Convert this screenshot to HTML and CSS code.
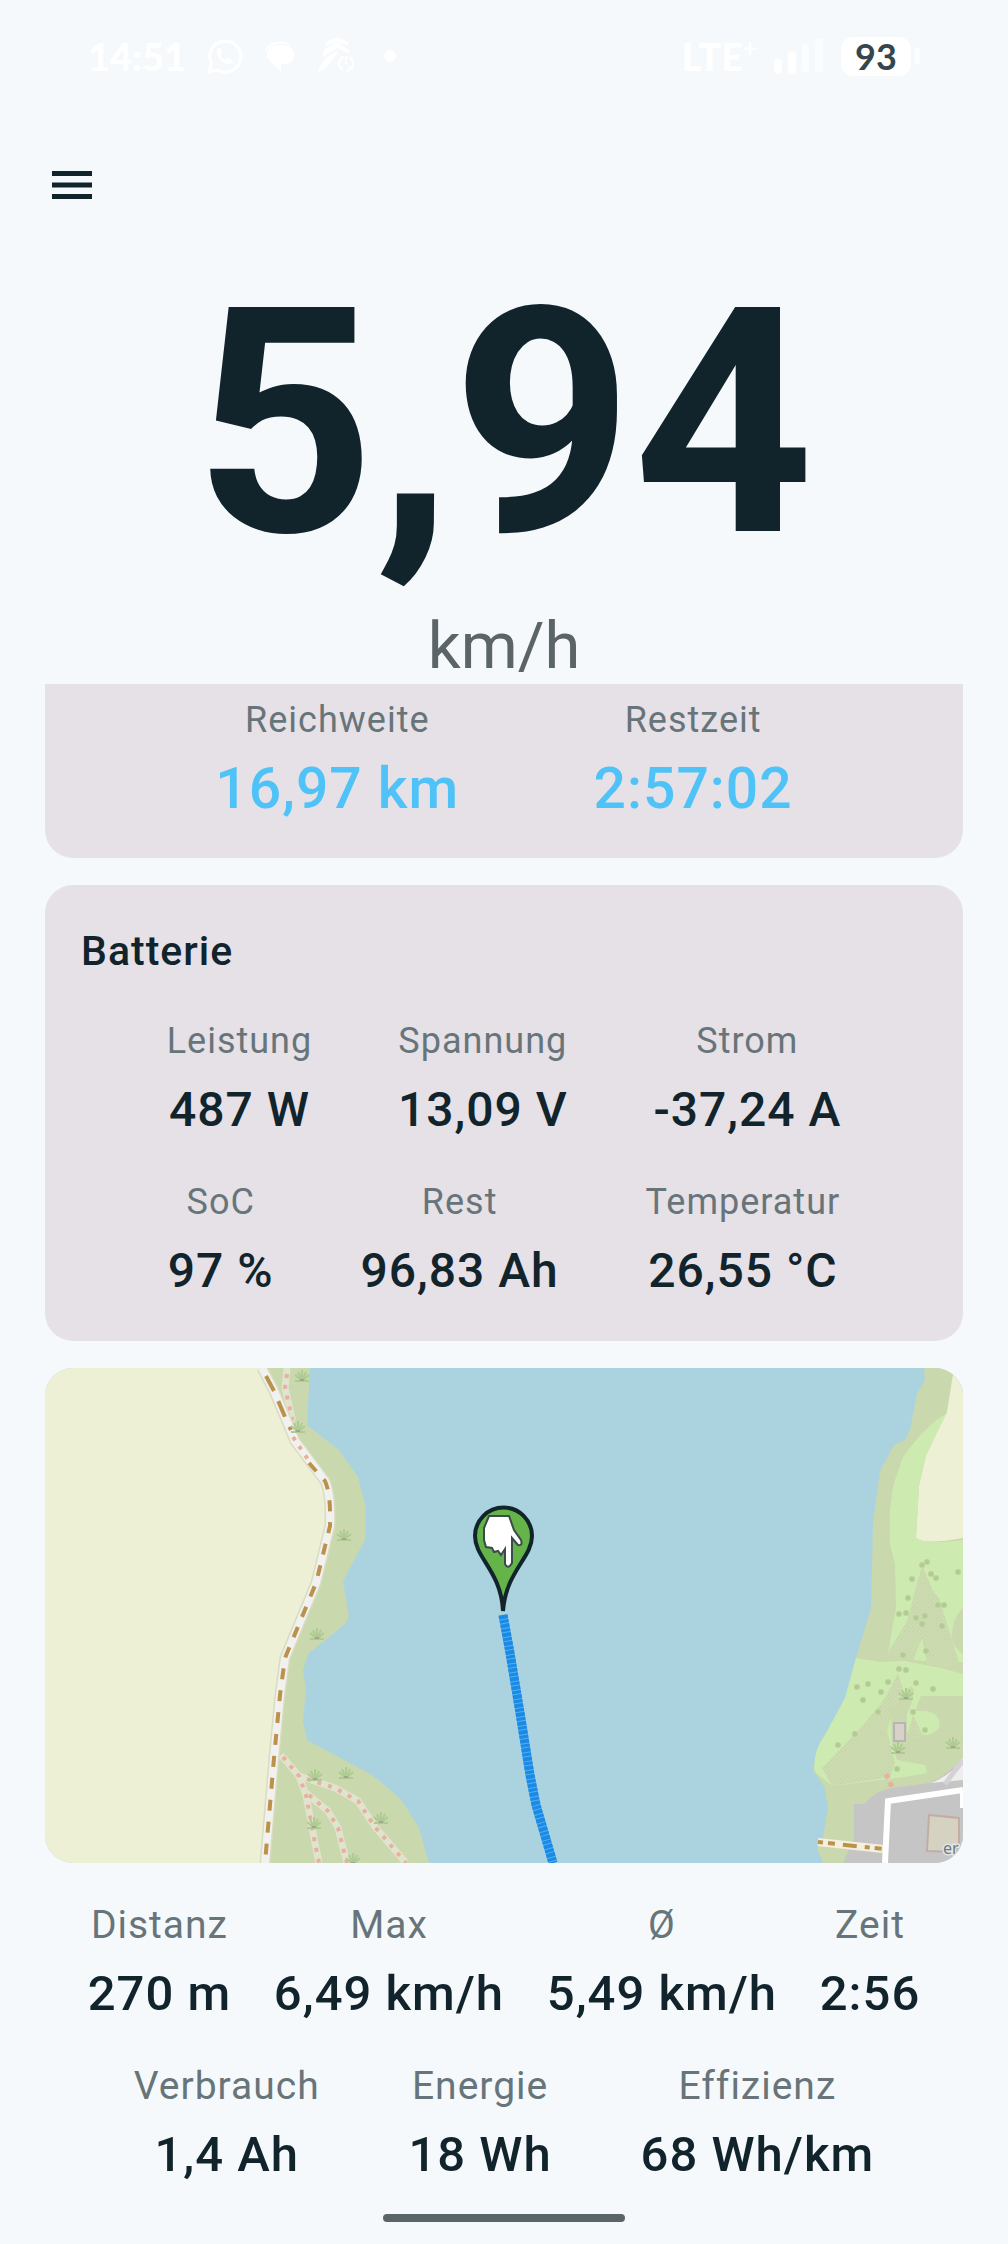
FILE: index.html
```html
<!DOCTYPE html>
<html lang="de">
<head>
    <meta charset="UTF-8">
    <meta name="viewport" content="width=device-width, initial-scale=1.0">
    <title>Fahrt</title>
    <link rel="stylesheet" href="styles.css">
</head>
<body>
    <div class="status-bar">
        <div class="status-left">
            <span class="clock">14:51</span>
            <svg class="status-icon" width="36" height="36" viewBox="0 0 36 36">
                <path d="M2 34l2.400-8.500A15.500 15.500 0 1 1 10.500 32z" fill="none" stroke="#fff" stroke-width="3"/>
                <path d="M12 10c-4 3-2 8 2 12s9 6 12 2l-1-2-4-2-2 2c-3-1-5-3-6-6l2-2-1-4z" fill="#fff"/>
            </svg>
            <svg class="status-icon" width="32" height="32" viewBox="0 0 32 32">
                <path d="M1 13C1 0 20-1 27 5C17 2 6 3 1 13z" fill="#fff"/>
                <path d="M13 5h6c15 0 15 19 1 19h-3v7L7 22C0 17 2 5 13 5z" fill="#fff"/>
            </svg>
            <svg class="status-icon" width="38" height="38" viewBox="0 0 38 38">
                <path d="M9 5l11-5 11 5v4L20 5 9 9zM7 13L20 5l13 9-2 2-11-5L6 20z" fill="#fff"/>
                <path d="M1 36C4 24 12 16 22 14L11 29z" fill="#fff"/>
                <path d="M27 20a7 7 0 0 0-1 13M32 20a7 7 0 0 1 1 12M29 19v8M31 35l1-4 4 1" fill="none" stroke="#fff" stroke-width="2"/>
            </svg>
            <span class="status-dot"></span>
        </div>
        <div class="status-right">
            <span class="network">LTE<sup>+</sup></span>
            <svg width="50" height="36" viewBox="0 0 50 36">
                <rect x="0" y="21" width="8" height="15" rx="4" fill="#fff"/>
                <rect x="14" y="13" width="8" height="23" rx="4" fill="#fff"/>
                <rect x="28" y="6" width="7" height="29" rx="3" fill="#fff" opacity="0.5"/>
                <rect x="41" y="0" width="8" height="35" rx="4" fill="#fff" opacity="0.5"/>
            </svg>
            <div class="battery">
                <span class="battery-level">93</span>
                <span class="battery-tip"></span>
            </div>
        </div>
    </div>

    <header class="top-bar">
        <button class="menu-button" type="button" aria-label="Menü">
            <svg width="42" height="28" viewBox="0 0 42 28">
                <path d="M1 2.500h40M1 14h40M1 25.500h40" stroke="#11242c" stroke-width="5"/>
            </svg>
        </button>
    </header>

    <main>
        <div class="speed">
            <div class="speed-value">5,94</div>
            <div class="speed-unit">km/h</div>
        </div>

        <section class="card card-range">
            <div class="row">
                <div class="stat"><span class="label">Reichweite</span><span class="value">16,97 km</span></div>
                <div class="stat"><span class="label">Restzeit</span><span class="value">2:57:02</span></div>
            </div>
        </section>

        <section class="card card-battery">
            <h2>Batterie</h2>
            <div class="row">
                <div class="stat"><span class="label">Leistung</span><span class="value">487 W</span></div>
                <div class="stat"><span class="label">Spannung</span><span class="value">13,09 V</span></div>
                <div class="stat"><span class="label">Strom</span><span class="value">-37,24 A</span></div>
            </div>
            <div class="row">
                <div class="stat"><span class="label">SoC</span><span class="value">97 %</span></div>
                <div class="stat"><span class="label">Rest</span><span class="value">96,83 Ah</span></div>
                <div class="stat"><span class="label">Temperatur</span><span class="value">26,55 °C</span></div>
            </div>
        </section>

        <div class="map">
            <svg viewBox="0 0 918 495" preserveAspectRatio="xMidYMid slice">
                <defs>
                    <pattern id="scrub" width="4" height="4" patternUnits="userSpaceOnUse">
                        <rect width="4" height="4" fill="#c9d8ad"/>
                        <path d="M0 0h1v1H0zM2 2h1v1H2z" fill="#d9dfc5"/>
                    </pattern>
                    <g id="grass" fill="none" stroke="#aecb92" stroke-width="2">
                        <path d="M-7 5H7M0 4V-6M-1 4L-7-1M1 4L7-1M-1 3L-4-4M1 3L4-4"/>
                        <path d="M-2 4h4" stroke="#a3a493"/>
                    </g>
                    <g id="tree">
                        <circle r="3" fill="#b9d39b"/>
                        <circle r="2" fill="#b5c896"/>
                    </g>
                </defs>

                <!-- water -->
                <rect width="918" height="495" fill="#abd3df"/>

                <!-- west bank -->
                <path d="M210 0H265L262 57L294 82L313 109L321 140L320 172L298 213L304 249L300 256L263 286L258 303L261 322L258 353L262 372L327 407L356 431L374 460L384 495H210z" fill="#c9d8ad"/>
                <path d="M0 0H218L236 38L246 72L284 122L285 160L270 218L239 295L233 370L222 495H0z" fill="#edf0d5"/>
                <g fill="none" stroke="#e0e3cd" stroke-width="7">
                    <path d="M242 0L240 20L247 50L244 62"/>
                    <path d="M236 387L254 408L261 427L268 465L274 495"/>
                    <path d="M254 408L290 420L313 433L330 459L361 495"/>
                    <path d="M261 425L283 443L293 460L302 495"/>
                </g>
                <g fill="none" stroke="#e9b19d" stroke-width="4" stroke-dasharray="4 7">
                    <path d="M242 6L240 20L247 50L244 62"/>
                    <path d="M238 389L254 408L261 427L268 465L274 495"/>
                    <path d="M262 411L290 420L313 433L330 459L361 495"/>
                    <path d="M264 427L283 443L293 460L302 495"/>
                </g>
                <path d="M217 0L229 23L243 56L250 73L280 113Q286 126 285 158L271 215L240 290L235 327L229 390L220 495" fill="none" stroke="#d9dcc0" stroke-width="11"/>
                <path d="M217 0L229 23L243 56L250 73L280 113Q286 126 285 158L271 215L240 290L235 327L229 390L220 495" fill="none" stroke="#f1f1ef" stroke-width="8"/>
                <path d="M221 8L229 23L243 56L246 62" fill="none" stroke="#ba924b" stroke-width="4" stroke-dasharray="17 11"/>
                <path d="M248 69L264 93" fill="none" stroke="#e9b19d" stroke-width="4" stroke-dasharray="4 7"/>
                <path d="M264 95L280 113Q286 126 285 158L271 215L240 290L235 327L229 390L220 495" fill="none" stroke="#ba924b" stroke-width="4" stroke-dasharray="11 11"/>
                <use href="#grass" x="257" y="8"/>
                <use href="#grass" x="253" y="59"/>
                <use href="#grass" x="299" y="167"/>
                <use href="#grass" x="272" y="266"/>
                <use href="#grass" x="301" y="405"/>
                <use href="#grass" x="270" y="407"/>
                <use href="#grass" x="336" y="450"/>
                <use href="#grass" x="269" y="455"/>
                <use href="#grass" x="308" y="491"/>

                <!-- east bank -->
                <path d="M879 0L880 12L872 26L865 62L860 72L849 77L835 103L828 155L826 240L811 290L800 330L789 352L773 378L768 402L780 420L783 440L778 470L772 480L778 495H918V0z" fill="#c9d8ad"/>
                <path d="M918 0H909L902 44L881 87L874 118L871 170Q880 177 918 170z" fill="#edf0d5"/>
                <path d="M901 46L880 90L874 118L871 170Q880 177 918 172V294L902 295L868 292L843 285L851 240L850 196L845 176V143L848 118L858 89Q880 58 901 46z" fill="#cdebb0"/>
                <path d="M811 290L835 294L860 293L900 301L918 306V328L876 328L870 343H880Q897 345 894 360Q885 370 876 366L870 370L862 364V346L868 329L854 330L846 350L847 376L852 392L880 397L882 405L860 409L787 418L770 404Q767 384 780 367L800 330z" fill="#cdebb0"/>
                <path d="M877 197L888 223L894 230L914 294L900 300L882 296L877 270L868 293L843 285L862 253z" fill="url(#scrub)"/>
                <path d="M853 305L840 330L820 355L777 400L787 418L845 409L850 395L842 363L849 338L858 321z" fill="url(#scrub)"/>
                <path d="M868 346L863 365Q870 376 877 366z" fill="url(#scrub)"/>
                <path d="M866 318Q852 328 845 348Q850 354 861 348Q868 334 869 322z" fill="#c9d8ad"/>
                <path d="M918 240Q907 250 907 270Q909 280 918 286z" fill="#c9d8ad"/>
                <path d="M918 390Q905 405 885 415L862 418Q830 420 820 436H809V470L798 495H918z" fill="#c5c5c5"/>
                <path d="M918 390Q908 406 886 415L918 412z" fill="#eeefec"/>
                <path d="M900 416L918 392" stroke="#d6d1d8" stroke-width="5"/>
                <path d="M840 495L843 433L918 422M918 425V440" fill="none" stroke="#fff" stroke-width="6"/>
                <path d="M841 406L848 421" stroke="#e9b19d" stroke-width="5" stroke-dasharray="5 4"/>
                <rect x="849" y="355" width="11" height="18" fill="#d8d1c8" stroke="#bab2b9" stroke-width="2"/>
                <path d="M884 447L914 450V475L910 484L882 483z" fill="#d5d2c1" stroke="#c2aca5" stroke-width="2"/>
                <path d="M773 474L838 481" stroke="#f3f0df" stroke-width="8"/>
                <path d="M773 474L838 481" stroke="#ba924b" stroke-width="4" stroke-dasharray="5 5 7 8 14 8"/>
                <g>
                    <use href="#tree" x="877" y="197"/>
                    <use href="#tree" x="882" y="194"/>
                    <use href="#tree" x="867" y="211"/>
                    <use href="#tree" x="886" y="206"/>
                    <use href="#tree" x="891" y="210"/>
                    <use href="#tree" x="913" y="204"/>
                    <use href="#tree" x="863" y="230"/>
                    <use href="#tree" x="854" y="246"/>
                    <use href="#tree" x="861" y="245"/>
                    <use href="#tree" x="893" y="237"/>
                    <use href="#tree" x="899" y="237"/>
                    <use href="#tree" x="871" y="250"/>
                    <use href="#tree" x="880" y="248"/>
                    <use href="#tree" x="877" y="256"/>
                    <use href="#tree" x="897" y="258"/>
                    <use href="#tree" x="858" y="287"/>
                    <use href="#tree" x="881" y="283"/>
                    <use href="#tree" x="854" y="301"/>
                    <use href="#tree" x="861" y="302"/>
                    <use href="#tree" x="843" y="314"/>
                    <use href="#tree" x="871" y="315"/>
                    <use href="#tree" x="823" y="316"/>
                    <use href="#tree" x="812" y="319"/>
                    <use href="#tree" x="836" y="324"/>
                    <use href="#tree" x="818" y="332"/>
                    <use href="#tree" x="888" y="321"/>
                    <use href="#tree" x="833" y="344"/>
                    <use href="#tree" x="868" y="344"/>
                    <use href="#tree" x="810" y="366"/>
                    <use href="#tree" x="880" y="362"/>
                    <use href="#tree" x="793" y="377"/>
                    <use href="#tree" x="852" y="401"/>
                </g>
                <use href="#grass" x="861" y="326"/>
                <use href="#grass" x="908" y="375"/>
                <use href="#grass" x="853" y="380"/>
                <text class="map-label" x="898" y="486">er</text>

                <!-- driven track -->
                <path d="M458 247L465 285L476 351L485 407L491 437L508 495" fill="none" stroke="#49b4f2" stroke-width="9"/>
                <path d="M458 247L465 285L476 351L485 407L491 437L508 495" fill="none" stroke="#1e88e5" stroke-width="9" stroke-dasharray="4 1 3 1"/>

                <!-- position marker -->
                <path d="M458 243C456 203 430 190 430 168A28 28 0 0 1 487 168C487 190 461 203 458 243z" fill="#65b44a" stroke="#11242c" stroke-width="4"/>
                <path d="M444 148H464L469 162L476 172Q478 178 473 177L467 170V195Q463 202 460 196V181L456 187L453 183L449 184L447 180L441 179L439 172V160z" fill="#fff" stroke="#3b4a4a" stroke-width="2"/>
            </svg>
        </div>
    </main>

    <footer class="trip">
        <div class="row">
            <div class="stat"><span class="label">Distanz</span><span class="value">270 m</span></div>
            <div class="stat"><span class="label">Max</span><span class="value">6,49 km/h</span></div>
            <div class="stat"><span class="label">Ø</span><span class="value">5,49 km/h</span></div>
            <div class="stat"><span class="label">Zeit</span><span class="value">2:56</span></div>
        </div>
        <div class="row">
            <div class="stat"><span class="label">Verbrauch</span><span class="value">1,4 Ah</span></div>
            <div class="stat"><span class="label">Energie</span><span class="value">18 Wh</span></div>
            <div class="stat"><span class="label">Effizienz</span><span class="value">68 Wh/km</span></div>
        </div>
    </footer>
    <div class="home-handle"></div>
</body>
</html>
```

FILE: styles.css
```css
* {
    box-sizing: border-box;
}
body {
    margin: 0;
    background-color: #f5f9fc;
    color: #11242c;
    font-family: Roboto, sans-serif;
}
.status-bar {
    display: flex;
    justify-content: space-between;
    align-items: center;
    height: 112px;
    padding: 0 88px;
    color: #ffffff;
    font-family: Lato, sans-serif;
    font-weight: 900;
}
.status-left,
.status-right,
.battery {
    display: flex;
    align-items: center;
}
.status-left {
    gap: 21px;
}
.status-right {
    gap: 17px;
}
.clock {
    font-size: 38px;
}
.status-dot {
    width: 12px;
    height: 12px;
    margin-left: 8px;
    border-radius: 50%;
    background-color: #ffffff;
}
.network {
    font-size: 38px;
    line-height: 48px;
}
.network sup {
    font-size: 24px;
    line-height: 1;
}
.battery {
    gap: 4px;
}
.battery-level {
    width: 70px;
    border-radius: 12px;
    background-color: #ffffff;
    color: #35464d;
    font-size: 36px;
    font-weight: 700;
    line-height: 39px;
    text-align: center;
}
.battery-tip {
    width: 5px;
    height: 18px;
    border-radius: 0 4px 4px 0;
    background-color: #ffffff;
    opacity: 0.6;
}
.top-bar {
    height: 146px;
    padding: 46px 38px;
}
.menu-button {
    display: flex;
    padding: 13px;
    border: none;
    background: none;
    cursor: pointer;
}
main {
    padding: 0 45px;
}
.speed {
    text-align: center;
}
.speed-value {
    font-size: 315px;
    font-weight: 700;
    line-height: 332px;
}
.speed-unit {
    height: 94px;
    color: #5b6568;
    font-size: 65px;
    line-height: 113px;
}
.card {
    padding: 34px 36px 24px;
    border-radius: 28px;
    background-color: #e6e0e7;
}
.card-range {
    padding-top: 14px;
    padding-bottom: 23px;
    border-radius: 0 0 28px 28px;
}
.card-battery {
    margin: 27px 0;
}
.card h2 {
    margin: 0 0 36px;
    font-size: 41px;
    font-weight: 500;
    letter-spacing: 1px;
    line-height: 64px;
}
.row {
    display: flex;
    justify-content: space-evenly;
}
.row + .row {
    margin-top: 24px;
}
.stat {
    display: flex;
    flex-direction: column;
    align-items: center;
}
.label {
    color: #67757a;
    font-size: 36px;
    letter-spacing: 1px;
    line-height: 44px;
}
.value {
    font-size: 48px;
    font-weight: 500;
    letter-spacing: 1px;
    line-height: 93px;
}
.card-range .value {
    color: #4fc3f7;
    font-size: 57px;
}
.map {
    overflow: hidden;
    border-radius: 28px;
}
.map svg {
    display: block;
    width: 100%;
}
.map-label {
    fill: #6b7a85;
    stroke: #e4e4e0;
    stroke-width: 3px;
    paint-order: stroke;
    font-family: "Noto Sans", sans-serif;
    font-size: 16px;
}
.trip {
    padding: 40px 45px 0;
}
.trip .label {
    font-size: 39px;
}
.trip .value {
    font-size: 49px;
}
.home-handle {
    width: 242px;
    height: 8px;
    margin: 13px auto 22px;
    border-radius: 4px;
    background-color: #5b6568;
}
```
